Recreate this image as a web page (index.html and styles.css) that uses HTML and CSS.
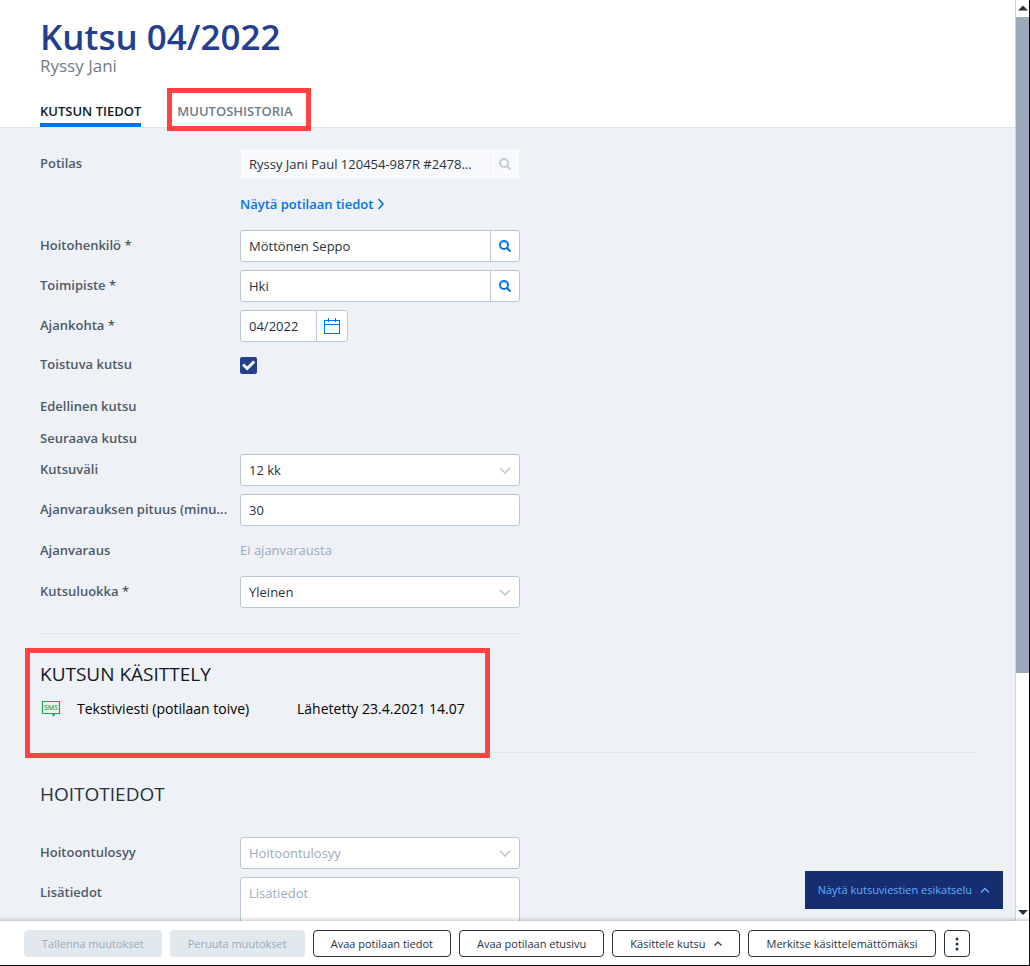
FILE: index.html
```html
<!DOCTYPE html>
<html lang="fi">
<head>
<meta charset="utf-8">
<title>Kutsu 04/2022</title>
<link rel="stylesheet" href="styles.css">
</head>
<body>
<div class="app">
  <div class="viewport">
    <main class="page">
      <header class="header">
        <h1 class="title">Kutsu 04/2022</h1>
        <p class="subtitle">Ryssy Jani</p>
        <nav class="tabs">
          <a class="tab tab-active" href="#tiedot">KUTSUN TIEDOT</a>
          <a class="tab tab-marked" href="#historia">MUUTOSHISTORIA</a>
        </nav>
      </header>

      <section class="form" id="tiedot">
        <div class="row">
          <label class="label" for="potilas">Potilas</label>
          <div class="field field-disabled">
            <input class="input" id="potilas" type="text" value="Ryssy Jani Paul 120454-987R #2478..." disabled>
            <button class="addon" type="button" aria-label="Hae potilas" disabled>
              <svg width="14" height="14" viewBox="0 0 14 14" fill="none" stroke="currentColor" stroke-width="2"><circle cx="6" cy="6" r="4"/><path d="M9 9l3.6 3.6"/></svg>
            </button>
          </div>
        </div>
        <div class="row row-text">
          <span class="label"></span>
          <a class="link" href="#potilas">Näytä potilaan tiedot
            <svg width="8" height="12" viewBox="0 0 8 12" fill="none" stroke="currentColor" stroke-width="1.600"><path d="M1.500 1l4.500 5-4.500 5"/></svg></a>
        </div>
        <div class="row">
          <label class="label" for="hoitohenkilo">Hoitohenkilö *</label>
          <div class="field">
            <input class="input" id="hoitohenkilo" type="text" value="Möttönen Seppo">
            <button class="addon" type="button" aria-label="Hae hoitohenkilö">
              <svg width="14" height="14" viewBox="0 0 14 14" fill="none" stroke="currentColor" stroke-width="2"><circle cx="6" cy="6" r="4"/><path d="M9 9l3.6 3.6"/></svg>
            </button>
          </div>
        </div>
        <div class="row">
          <label class="label" for="toimipiste">Toimipiste *</label>
          <div class="field">
            <input class="input" id="toimipiste" type="text" value="Hki">
            <button class="addon" type="button" aria-label="Hae toimipiste">
              <svg width="14" height="14" viewBox="0 0 14 14" fill="none" stroke="currentColor" stroke-width="2"><circle cx="6" cy="6" r="4"/><path d="M9 9l3.6 3.6"/></svg>
            </button>
          </div>
        </div>
        <div class="row">
          <label class="label" for="ajankohta">Ajankohta *</label>
          <div class="field field-date">
            <input class="input" id="ajankohta" type="text" value="04/2022">
            <button class="addon addon-date" type="button" aria-label="Valitse kuukausi">
              <svg width="16" height="16" viewBox="0 0 16 16" fill="none" stroke="currentColor" shape-rendering="crispEdges"><path d="M.5 2.5h15v13H.5zM.5 6.500h15M4.500 0v4M11.500 0v4"/></svg>
            </button>
          </div>
        </div>
        <div class="row row-check">
          <label class="label" for="toistuva">Toistuva kutsu</label>
          <span class="check">
            <input class="checkbox" id="toistuva" type="checkbox" checked>
            <svg class="tick" width="17" height="17" viewBox="0 0 17 17" fill="none" stroke="#fff" stroke-width="3"><path d="M3 7.500l4.200 4 7-7"/></svg>
          </span>
        </div>
        <div class="row row-tight"><span class="label label-text">Edellinen kutsu</span></div>
        <div class="row row-tight"><span class="label label-text">Seuraava kutsu</span></div>
        <div class="row">
          <label class="label" for="vali">Kutsuväli</label>
          <div class="field">
            <select class="select" id="vali"><option>12 kk</option></select>
            <svg class="chevron" width="12" height="8" viewBox="0 0 12 8" fill="none" stroke="currentColor" stroke-width="1.500"><path d="M1 1l5 5 5-5"/></svg>
          </div>
        </div>
        <div class="row">
          <label class="label" for="pituus">Ajanvarauksen pituus (minu...</label>
          <div class="field"><input class="input" id="pituus" type="text" value="30"></div>
        </div>
        <div class="row row-text">
          <span class="label label-text">Ajanvaraus</span>
          <span class="muted">Ei ajanvarausta</span>
        </div>
        <div class="row">
          <label class="label" for="luokka">Kutsuluokka *</label>
          <div class="field">
            <select class="select" id="luokka"><option>Yleinen</option></select>
            <svg class="chevron" width="12" height="8" viewBox="0 0 12 8" fill="none" stroke="currentColor" stroke-width="1.500"><path d="M1 1l5 5 5-5"/></svg>
          </div>
        </div>
      </section>

      <section class="handling">
        <h2 class="heading heading-dark">KUTSUN KÄSITTELY</h2>
        <div class="message">
          <svg class="sms" width="20" height="18" viewBox="0 0 20 18" fill="none">
            <path d="M1.500 1.500h17v12h-17z" stroke="#12ab5c" stroke-width="1.200"/>
            <path d="M11 13h4.500l-3.500 4z" fill="#12ab5c"/>
            <text class="sms-text" x="10" y="10" text-anchor="middle">SMS</text>
          </svg>
          <span class="message-type">Tekstiviesti (potilaan toive)</span>
          <span>Lähetetty 23.4.2021 14.07</span>
        </div>
      </section>

      <section class="care">
        <h2 class="heading">HOITOTIEDOT</h2>
        <div class="row">
          <label class="label" for="syy">Hoitoontulosyy</label>
          <div class="field">
            <select class="select select-empty" id="syy"><option>Hoitoontulosyy</option></select>
            <svg class="chevron" width="12" height="8" viewBox="0 0 12 8" fill="none" stroke="currentColor" stroke-width="1.500"><path d="M1 1l5 5 5-5"/></svg>
          </div>
        </div>
        <div class="row">
          <label class="label" for="lisa">Lisätiedot</label>
          <div class="field field-area"><textarea class="textarea" id="lisa" placeholder="Lisätiedot"></textarea></div>
        </div>
      </section>
    </main>

    <div class="scrollbar">
      <svg class="arrow" width="13" height="17" viewBox="0 0 13 17" fill="#27323d"><path d="M2 10.500l5-5 5 5z"/></svg>
      <div class="track"><div class="thumb"></div></div>
      <svg class="arrow" width="13" height="17" viewBox="0 0 13 17" fill="#27323d"><path d="M2 6h10l-5 5z"/></svg>
    </div>

    <button class="preview" type="button">Näytä kutsuviestien esikatselu
      <svg width="10" height="6" viewBox="0 0 10 6" fill="none" stroke="currentColor" stroke-width="1.300"><path d="M1 5.500l4-4 4 4"/></svg>
    </button>
  </div>

  <footer class="footer">
    <button class="btn" type="button" disabled>Tallenna muutokset</button>
    <button class="btn" type="button" disabled>Peruuta muutokset</button>
    <button class="btn" type="button">Avaa potilaan tiedot</button>
    <button class="btn" type="button">Avaa potilaan etusivu</button>
    <button class="btn" type="button">Käsittele kutsu
      <svg width="8" height="5" viewBox="0 0 8 5" fill="none" stroke="currentColor" stroke-width="1.200"><path d="M.5 4.500L4 1l3.500 3.500"/></svg>
    </button>
    <button class="btn" type="button">Merkitse käsittelemättömäksi</button>
    <button class="btn btn-more" type="button" aria-label="Lisää toimintoja">
      <svg width="4" height="14" viewBox="0 0 4 14" fill="currentColor"><circle cx="2" cy="2" r="1.500"/><circle cx="2" cy="7" r="1.500"/><circle cx="2" cy="12" r="1.500"/></svg>
    </button>
  </footer>
</div>
</body>
</html>
```
FILE: styles.css
```css
*, *::after { box-sizing: border-box; }
body {
  margin: 0;
  font: 13px/20px "Open Sans", "Noto Sans", sans-serif;
  color: #27323d;
}
button, input, select, textarea { font: inherit; color: inherit; margin: 0; }
a { text-decoration: none; }
svg { flex: none; }

.app {
  display: flex;
  flex-direction: column;
  height: 100vh;
  border-right: 1px solid #000;
  border-bottom: 1px solid #000;
  background: #eef1f6;
}
.viewport { position: relative; display: flex; flex: 1; min-height: 0; }
.page { flex: 1; min-width: 0; overflow: hidden; }

.header {
  padding: 16px 40px 0;
  background: #fff;
  border-bottom: 1px solid #e0e5ea;
}
.title { margin: 0; font-size: 35px; line-height: 42px; font-weight: 600; color: #233f8e; }
.subtitle { margin: 0 0 18px; font-size: 17px; line-height: 16px; color: #6f7c88; }
.tabs { display: flex; gap: 36px; }
.tab { position: relative; padding: 10px 0 2px; border-bottom: 4px solid transparent; line-height: 19px; font-weight: 600; color: #6f7c88; }
.tab-active { color: #121a21; border-color: #0073e6; }
.tab-marked::after {
  content: "";
  position: absolute;
  inset: -4px -18px -8px -10px;
  border: 5px solid #ff4242;
}

.form { width: 480px; margin: 20px 40px 0; padding-bottom: 17px; border-bottom: 1px solid #dfe4ea; }
.row { display: flex; align-items: center; min-height: 32px; margin-bottom: 8px; }
.row-tight { margin-bottom: 0; }
.row-text { margin-bottom: 10px; }
.row-check { min-height: 30px; margin-bottom: 10px; }
.label { width: 200px; height: 22px; font-weight: 600; color: #4d5b68; white-space: nowrap; }
.label-text { height: 20px; }
.field {
  position: relative;
  display: flex;
  width: 280px;
  height: 32px;
  background: #fff;
  border: 1px solid #bac7d6;
  border-radius: 3px;
}
.input, .select, .textarea {
  flex: 1;
  min-width: 0;
  padding: 0 8px;
  border: 0;
  outline: 0;
  background: none;
  appearance: none;
  resize: none;
}
.select-empty, .textarea::placeholder { color: #9aabbc; opacity: 1; }
.textarea { padding-top: 5px; }
.field-date { width: 108px; }
.field-area { height: 80px; }
.row:has(.field-area) { align-items: flex-start; }
.row:has(.field-area) .label { margin-top: 5px; }
.addon {
  display: flex;
  align-items: center;
  justify-content: center;
  width: 29px;
  padding: 0;
  border: 0;
  border-left: 1px solid #bac7d6;
  background: none;
  color: #0073e6;
}
.addon-date { width: 31px; }
.field-disabled { background: #f7f9fb; border-color: #eef1f6; }
.field-disabled .addon { color: #c0ccd8; border-color: #eef1f6; }
.chevron { position: absolute; right: 8px; top: 12px; color: #bac7d6; pointer-events: none; }
.link { display: flex; align-items: center; gap: 4px; font-weight: 600; color: #0073e6; }
.muted { color: #9aabbc; }
.check { position: relative; display: flex; }
.checkbox { width: 17px; height: 17px; appearance: none; background: #233f8e; border-radius: 2px; }
.tick { position: absolute; inset: 0; pointer-events: none; }

.heading { margin: 0; font-size: 19px; line-height: 28px; font-weight: 400; }
.heading-dark { color: #121a21; }
.handling {
  position: relative;
  margin: 26px 40px 0;
  padding-bottom: 33px;
  border-bottom: 1px solid #dfe6ea;
  color: #000;
}
.handling::after {
  content: "";
  position: absolute;
  top: -12px;
  left: -15px;
  width: 465px;
  height: 110px;
  border: 5px solid #ff4242;
}
.message { display: flex; align-items: center; margin-top: 11px; font-size: 14px; }
.sms { margin: 0 16px 0 1px; }
.sms-text { font: 600 7px "Open Sans", sans-serif; fill: #12ab5c; }
.message-type { width: 220px; }
.care { margin: 27px 40px 0; }
.care .heading { margin-bottom: 29px; }

.scrollbar { display: flex; flex-direction: column; width: 13px; background: #fff; box-shadow: -1px 0 #ccd6df; }
.track { flex: 1; }
.thumb { height: 74%; background: #9aa9b9; }

.preview {
  position: absolute;
  right: 26px;
  bottom: 12px;
  display: flex;
  align-items: center;
  gap: 8px;
  height: 38px;
  padding: 0 13px;
  border: 0;
  background: #162d70;
  color: #5eaeff;
  font-size: 11px;
}

.footer {
  position: relative;
  display: flex;
  gap: 8px;
  padding: 9px 24px 8px;
  background: #fff;
  box-shadow: 0 -1px 4px rgba(60, 70, 80, .35);
}
.btn {
  display: flex;
  align-items: center;
  gap: 9px;
  height: 27px;
  padding: 0 17px;
  border: 1px solid #27323d;
  border-radius: 4px;
  background: #fff;
  font-size: 11px;
  white-space: nowrap;
}
.btn:disabled { background: #e1e8ee; border-color: #e1e8ee; color: #9aabbc; }
.btn-more { padding: 0 10px; }
```
